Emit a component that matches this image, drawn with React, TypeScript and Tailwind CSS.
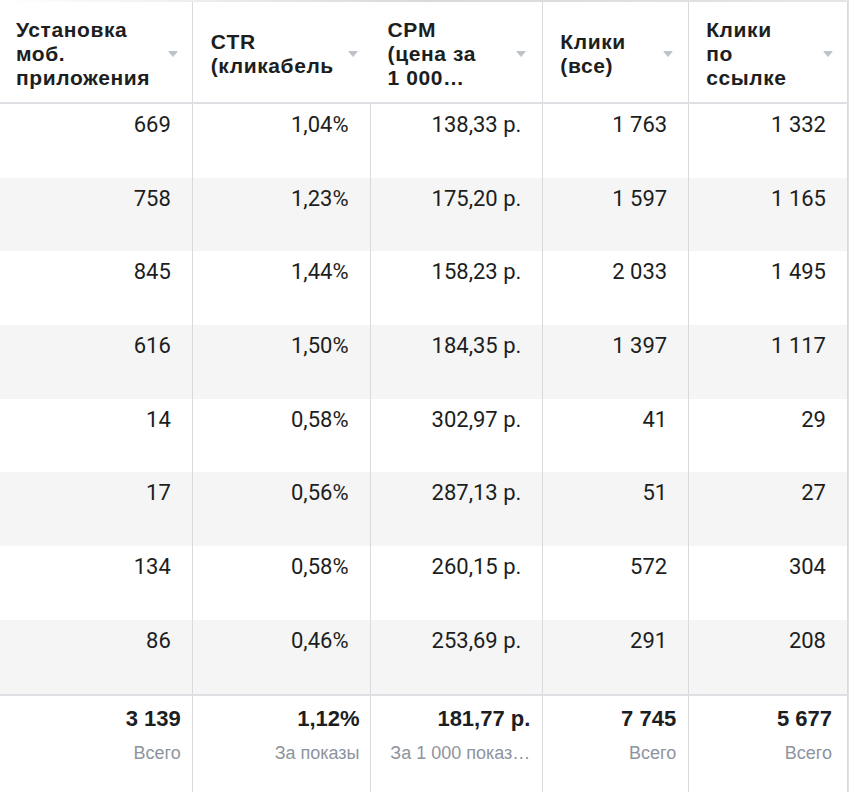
import React from "react";

type Col = {
  head: string[];
  w: string;
  hPl: string;
  hPr: string;
  hBorder: boolean;
  fPr: string;
};

const cols: Col[] = [
  { head: ["Установка", "моб.", "приложения"], w: "w-[193px]", hPl: "pl-[16px]", hPr: "pr-[14px]", hBorder: true, fPr: "pr-[11px]" },
  { head: ["CTR", "(кликабель"], w: "w-[178px]", hPl: "pl-[18px]", hPr: "pr-[12px]", hBorder: false, fPr: "pr-[10px]" },
  { head: ["CPM", "(цена за", "1 000…"], w: "w-[173px]", hPl: "pl-[17px]", hPr: "pr-[16px]", hBorder: true, fPr: "pr-[12px]" },
  { head: ["Клики", "(все)"], w: "w-[146px]", hPl: "pl-[17px]", hPr: "pr-[15px]", hBorder: true, fPr: "pr-[12px]" },
  { head: ["Клики", "по", "ссылке"], w: "w-[159px]", hPl: "pl-[17px]", hPr: "pr-[14px]", hBorder: true, fPr: "pr-[15px]" },
];

const rows: string[][] = [
  ["669", "1,04%", "138,33 р.", "1 763", "1 332"],
  ["758", "1,23%", "175,20 р.", "1 597", "1 165"],
  ["845", "1,44%", "158,23 р.", "2 033", "1 495"],
  ["616", "1,50%", "184,35 р.", "1 397", "1 117"],
  ["14", "0,58%", "302,97 р.", "41", "29"],
  ["17", "0,56%", "287,13 р.", "51", "27"],
  ["134", "0,58%", "260,15 р.", "572", "304"],
  ["86", "0,46%", "253,69 р.", "291", "208"],
];

const totals = [
  ["3 139", "Всего"],
  ["1,12%", "За показы"],
  ["181,77 р.", "За 1 000 показ…"],
  ["7 745", "Всего"],
  ["5 677", "Всего"],
];

function Caret() {
  return (
    <svg width="10" height="6" viewBox="0 0 10 6" className="shrink-0">
      <path d="M0.8 0.5 H9.2 L5 5.5 Z" fill="#bec3c9" stroke="#bec3c9" strokeWidth="1" strokeLinejoin="round" />
    </svg>
  );
}

export default function App() {
  return (
    <div className="w-[850px] h-[792px] bg-white overflow-hidden text-[#1c1e21]">
      <div className="w-[849px] border-r border-[#dfe1e4]">
        <div className="h-[2px] bg-linear-to-r from-white via-[#d9d9d9] to-[#e6e6e6]" />
        <div className="flex h-[102px] border-b-2 border-[#dddfe2]">
          {cols.map((c, i) => (
            <div
              key={i}
              className={`${c.w} ${c.hPl} ${c.hPr} pt-[3px] flex items-center border-r ${c.hBorder ? "border-[#d8dadd]" : "border-transparent"}`}
            >
              <div className="flex-1 overflow-hidden whitespace-nowrap font-['Liberation_Sans',Arial,sans-serif] font-bold text-[21px] leading-[24px] tracking-[0.6px]">
                {c.head.map((l, j) => (
                  <div key={j}>{l}</div>
                ))}
              </div>
              <Caret />
            </div>
          ))}
        </div>
        {rows.map((r, ri) => (
          <div key={ri} className={`flex h-[73.7px] ${ri % 2 === 1 ? "bg-[#f5f5f6]" : "bg-white"}`}>
            {r.map((v, ci) => (
              <div
                key={ci}
                className={`${cols[ci].w} pr-[21px] pt-[8px] text-right border-r border-[#d8dadd] font-['Roboto',sans-serif] text-[22px] leading-[26px]`}
              >
                {v}
              </div>
            ))}
          </div>
        ))}
        <div className="flex h-[100px] border-t-2 border-[#dddfe2]">
          {totals.map((t, ci) => (
            <div
              key={ci}
              className={`${cols[ci].w} ${cols[ci].fPr} pl-[15px] pt-[9px] text-right border-r border-[#d8dadd] font-['Liberation_Sans',Arial,sans-serif]`}
            >
              <div className="font-bold text-[22px] leading-[28px]">{t[0]}</div>
              <div className="mt-[8px] text-[18px] leading-[24px] text-[#8d949e] whitespace-nowrap">{t[1]}</div>
            </div>
          ))}
        </div>
      </div>
    </div>
  );
}
